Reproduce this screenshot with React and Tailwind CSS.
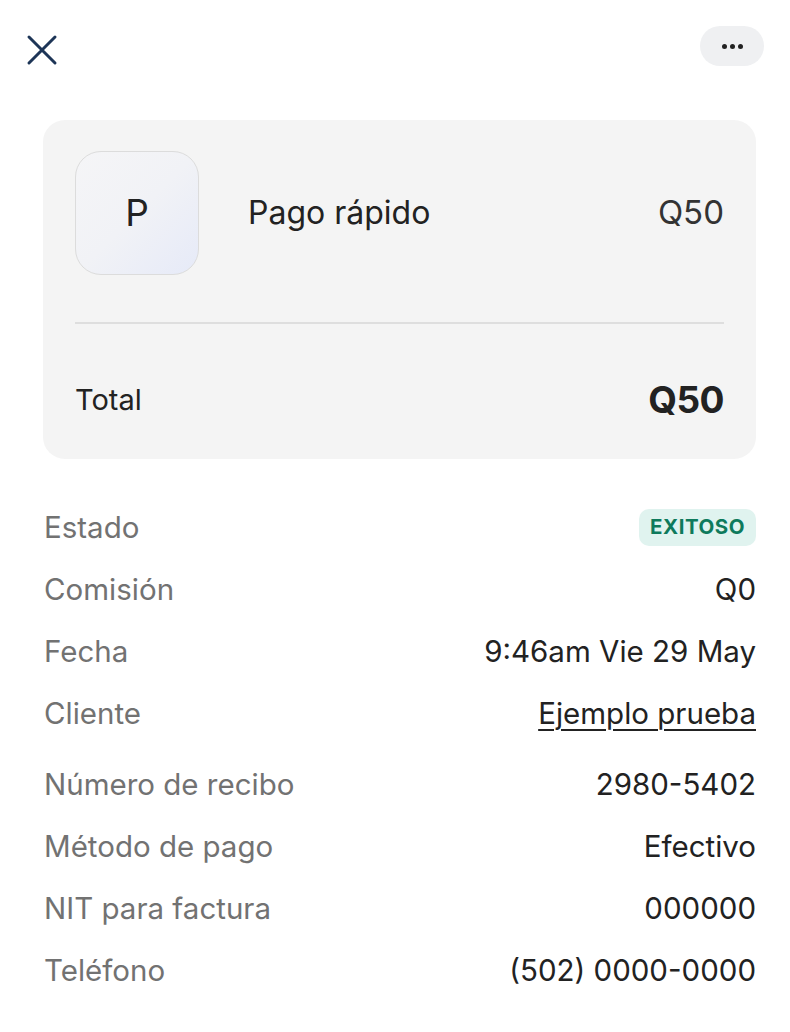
import React from "react";

const rows = [
  { label: "Comisión", value: "Q0" },
  { label: "Fecha", value: "9:46am Vie 29 May" },
  { label: "Cliente", value: "Ejemplo prueba", link: true },
  { label: "Número de recibo", value: "2980-5402" },
  { label: "Método de pago", value: "Efectivo" },
  { label: "NIT para factura", value: "000000" },
  { label: "Teléfono", value: "(502) 0000-0000" },
];

const App = () => {
  return (
    <div
      className="w-[790px] h-[1032px] bg-white overflow-hidden"
      style={{ fontFamily: "Inter, 'Liberation Sans', sans-serif" }}
    >
      {/* Top bar */}
      <div className="flex items-center justify-between pl-[26px] pr-[26px] pt-[26px] h-[66px]">
        <button className="w-[32px] h-[32px] flex items-center justify-center mt-[8px]">
          <svg width="32" height="32" viewBox="0 0 32 32" fill="none">
            <path
              d="M3 3L29 29M29 3L3 29"
              stroke="#1d3557"
              strokeWidth="3"
              strokeLinecap="round"
            />
          </svg>
        </button>
        <button className="w-[64px] h-[40px] rounded-full bg-[#eff0f2] flex items-center justify-center gap-[3px]">
          <span className="w-[5px] h-[5px] rounded-full bg-[#222]" />
          <span className="w-[5px] h-[5px] rounded-full bg-[#222]" />
          <span className="w-[5px] h-[5px] rounded-full bg-[#222]" />
        </button>
      </div>

      {/* Summary card */}
      <div className="ml-[43px] mr-[34px] mt-[54px] rounded-[22px] bg-[#f4f4f4] px-[32px] pt-[31px] pb-[31px]">
        <div className="flex items-center">
          <div className="w-[124px] h-[124px] rounded-[26px] border border-[#dcdcdc] bg-gradient-to-br from-[#f5f5f7] via-[#f1f2f6] to-[#e6eaf8] flex items-center justify-center">
            <span className="text-[37px] text-[#222]">P</span>
          </div>
          <span className="ml-[49px] text-[32px] text-[#222]">Pago rápido</span>
          <span className="ml-auto text-[33px] text-[#333]">Q50</span>
        </div>
        <div className="h-[2px] bg-[#dedede] mt-[47px]" />
        <div className="flex items-center justify-between mt-[48px]">
          <span className="text-[29px] text-[#222]">Total</span>
          <span className="text-[37px] font-bold text-[#222] tracking-[-0.5px]">Q50</span>
        </div>
      </div>

      {/* Details */}
      <div className="ml-[44px] mr-[34px] mt-[50px] flex flex-col">
        <div className="flex items-center justify-between h-[38px]">
          <span className="text-[29.5px] text-[#727272]">Estado</span>
          <span className="px-[11px] h-[37px] flex items-center rounded-[10px] bg-[#e0f3ef] text-[20.5px] font-bold text-[#0e7a5c] tracking-[0.5px]">
            EXITOSO
          </span>
        </div>
        {rows.map((r, i) => (
          <div
            key={r.label}
            className={`flex items-center justify-between h-[38px] ${i === 3 ? "mt-[33px]" : "mt-[24px]"}`}
          >
            <span className="text-[29.5px] text-[#727272]">{r.label}</span>
            <span
              className={
                r.link
                  ? "text-[29.5px] text-[#222] underline underline-offset-[5px] decoration-[2px]"
                  : "text-[29.5px] text-[#222]"
              }
            >
              {r.value}
            </span>
          </div>
        ))}
      </div>
    </div>
  );
};

export default App;
